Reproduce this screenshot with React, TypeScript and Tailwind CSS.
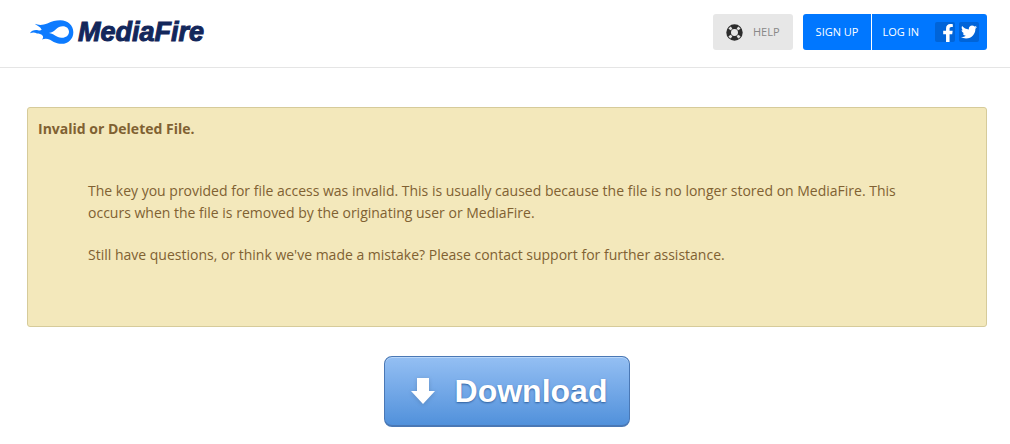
import { FaFacebookF, FaTwitter } from 'react-icons/fa'

function FlameLogo() {
  return (
    <svg viewBox="32 35 132 71" className="h-6 w-11" aria-hidden="true">
      <path
        fill="#0d7bff"
        fillRule="evenodd"
        d="M46 46 C58 51 72 50 84 45 C98 37 109 35 123 35 C146 35 162 50 162 71 C162 91 147 106 127 106 C111 106 102 100 92 94 C83 89 75 90 68 93 C72 89 72 85 70 82 C65 76 59 75 53 75 C46 71 40 71 32 74 C36 66 46 63 56 65 C60 66 64 66 67 64 C63 55 55 53 46 46 Z M86 73 C97 74 103 69 109 63 C116 56 122 53 130 53 C142 53 149 60 149 70 C149 82 138 89 126 88 C111 87 104 75 86 73 Z"
      />
    </svg>
  )
}

function LifeRing() {
  return (
    <svg viewBox="0 0 18 18" className="size-[17px]" aria-hidden="true">
      <circle cx="9" cy="9" r="6.2" fill="none" stroke="#2c2c2c" strokeWidth="5" />
      <circle
        cx="9"
        cy="9"
        r="6"
        fill="none"
        stroke="#e4e4e4"
        strokeWidth="3"
        pathLength="80"
        strokeDasharray="6 14"
        strokeDashoffset="-7"
      />
    </svg>
  )
}

function Header() {
  return (
    <header className="border-b border-[#e5e5e5] pt-3.5 pr-[23px] pb-[17px] pl-[27px]">
      <div className="flex items-start justify-between">
        <a href="#home" className="flex h-9 items-center gap-1 pl-[3px]">
          <FlameLogo />
          <span className="font-['Liberation_Sans',sans-serif] text-[27px] font-bold text-[#13275b] italic [-webkit-text-stroke:1px_#13275b]">
            MediaFire
          </span>
        </a>

        <nav className="flex gap-2.5 text-[11px]">
          <a
            href="#help"
            className="flex h-9 items-center gap-2.5 rounded-[3px] bg-[#e7e7e7] px-[13px] text-[#888]"
          >
            <LifeRing />
            HELP
          </a>
          <div className="flex h-9 overflow-hidden rounded-[3px] bg-[#0077ff] text-white">
            <a href="#signup" className="flex items-center border-r border-white px-[13px]">
              SIGN UP
            </a>
            <div className="flex items-center gap-1 pr-2 pl-2.5">
              <a href="#login" className="mr-3">
                LOG IN
              </a>
              <a
                href="#facebook"
                aria-label="Log in with Facebook"
                className="flex size-5 items-end justify-end rounded-xs bg-[#0064d8] pr-px"
              >
                <FaFacebookF className="h-[18px] w-3" />
              </a>
              <a
                href="#twitter"
                aria-label="Log in with Twitter"
                className="flex size-5 items-center justify-center rounded-xs bg-[#0064d8]"
              >
                <FaTwitter className="size-4" />
              </a>
            </div>
          </div>
        </nav>
      </div>
    </header>
  )
}

export default function App() {
  return (
    <div className="bg-white font-['Open_Sans',sans-serif]">
      <Header />

      <main className="pt-[39px] pr-[23px] pb-4 pl-[27px]">
        <section className="rounded-[3px] border border-[#d6cb9a] bg-[#f3e8bb] px-2.5 pt-2.5 pb-[60px] text-sm text-[#806132]">
          <h1 className="leading-[22px] font-bold">Invalid or Deleted File.</h1>
          <div className="mt-10 space-y-5 px-[50px] leading-[22px]">
            <p>
              The key you provided for file access was invalid. This is usually caused because the
              file is no longer stored on MediaFire. This occurs when the file is removed by the
              originating user or MediaFire.
            </p>
            <p>
              Still have questions, or think we've made a mistake? Please contact support for
              further assistance.
            </p>
          </div>
        </section>

        <div className="mt-[29px] flex justify-center">
          <button
            type="button"
            className="flex h-[71px] items-center gap-5 rounded-lg border border-b-2 border-[#4a78b5] bg-linear-to-b from-[#94bff3] to-[#5191db] pr-[22px] pl-[26px] font-['Liberation_Sans',sans-serif] text-[32px] font-bold text-white inset-shadow-[0_1px_0_#b9d7fa] text-shadow-[0_1px_2px_#2f5f9d]"
          >
            <svg viewBox="0 0 24 26" className="h-[26px] w-6 drop-shadow-sm" aria-hidden="true">
              <path fill="#fff" d="M6 0h12v13h6L12 26 0 13h6z" />
            </svg>
            Download
          </button>
        </div>
      </main>
    </div>
  )
}
